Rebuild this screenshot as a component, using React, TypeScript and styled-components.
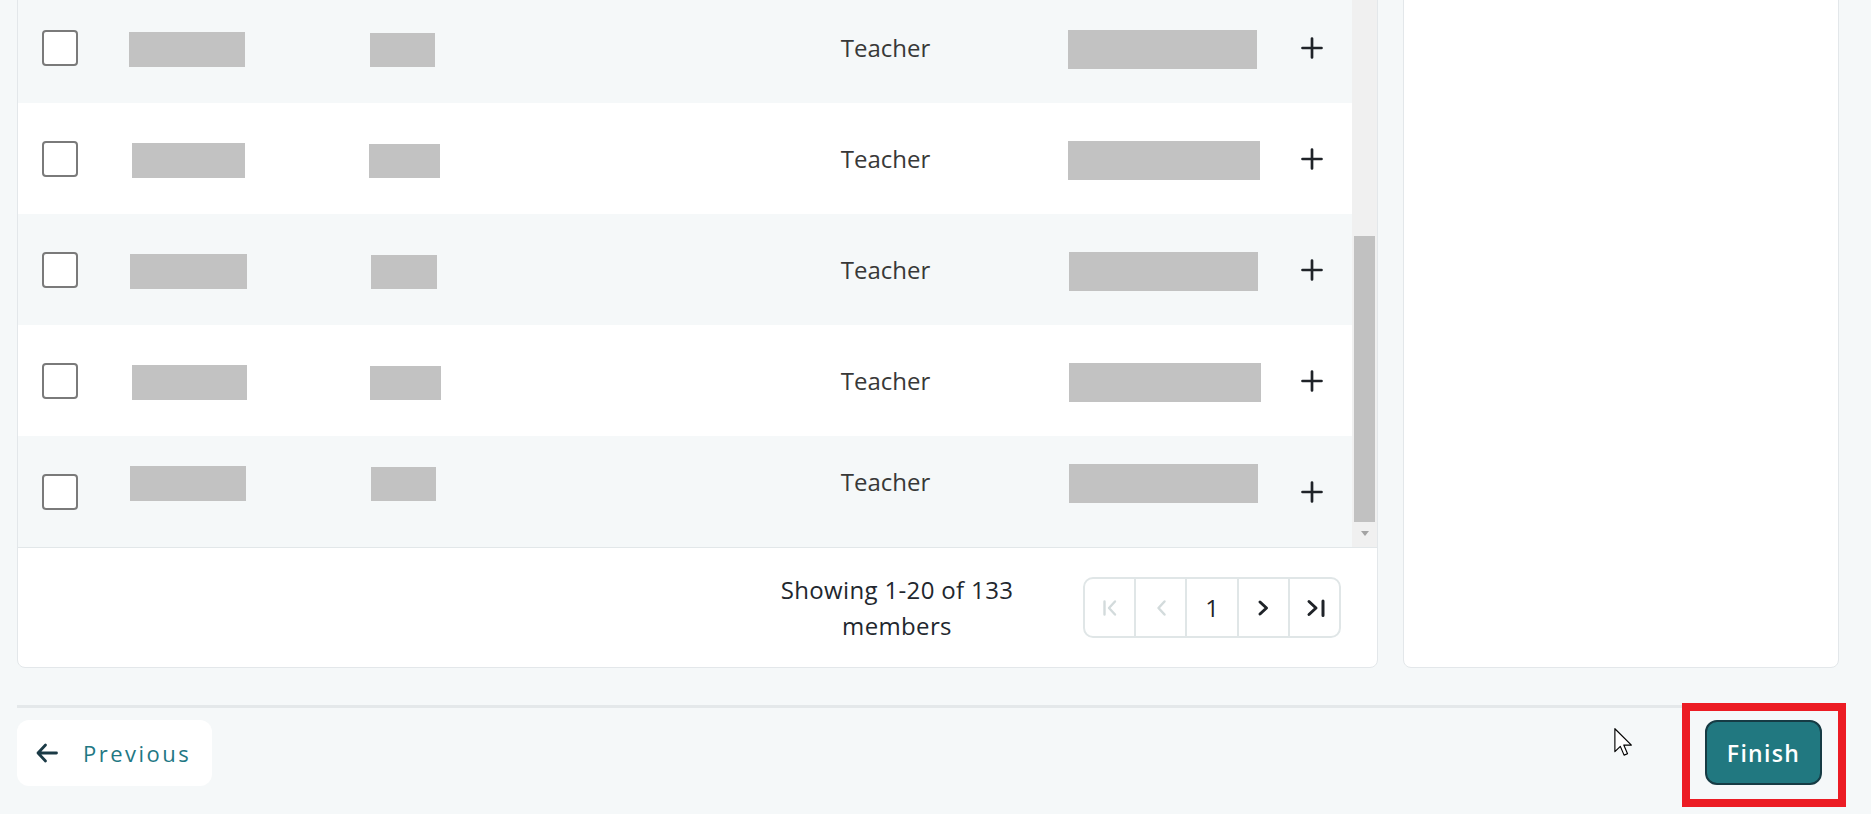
import styled, { createGlobalStyle } from "styled-components";

const GlobalStyle = createGlobalStyle`
  body {
    margin: 0;
    background: #f5f8f9;
    font-family: "Open Sans", "Liberation Sans", sans-serif;
  }
`;

const Page = styled.div`
  height: 814px;
  overflow: hidden;
  padding: 0 32px 0 17px;
  background: #f5f8f9;
`;

const Panels = styled.div`
  display: grid;
  grid-template-columns: 1361px 436px;
  column-gap: 25px;
  margin-top: -9px;
`;

const Card = styled.div`
  background: #ffffff;
  border: 1px solid #e3e7ea;
  border-radius: 8px;
  overflow: hidden;
`;

const TableCard = styled(Card)`
  display: flex;
  flex-direction: column;
`;

const Body = styled.div`
  display: flex;
`;

const Rows = styled.div`
  flex: 1;
`;

const Row = styled.div<{ $odd: boolean }>`
  display: grid;
  grid-template-columns: 111px 241px 333px 365px 233px 1fr;
  align-items: center;
  height: 111px;
  background: ${(p) => (p.$odd ? "#f5f8f9" : "#ffffff")};
`;

const CheckCell = styled.div`
  padding-left: 24px;
  display: flex;
`;

const Check = styled.input.attrs({ type: "checkbox" })`
  appearance: none;
  width: 36px;
  height: 36px;
  margin: 0;
  border: 2px solid #7a7a7a;
  border-radius: 4px;
  background: #fff;
`;

const Redacted = styled.div<{ $w: number; $x: number; $h: number; $lift: number }>`
  width: ${(p) => p.$w}px;
  height: ${(p) => p.$h}px;
  margin-left: ${(p) => p.$x}px;
  margin-top: 4px;
  margin-bottom: ${(p) => p.$lift * 2}px;
  background: #c2c2c2;
`;

const Role = styled.div<{ $lift: number }>`
  text-align: center;
  font-size: 24px;
  line-height: 32px;
  color: #383838;
  margin-bottom: ${(p) => p.$lift * 2}px;
`;

const AddCell = styled.div`
  display: flex;
  color: #1f2328;
`;

const Scrollbar = styled.div`
  width: 25px;
  background: #f0f0f0;
  display: flex;
  flex-direction: column;
  align-items: center;
`;

const Thumb = styled.div`
  width: 21px;
  height: 286px;
  margin-top: 244px;
  background: #c1c1c1;
`;

const ScrollButton = styled.div`
  margin-top: auto;
  height: 25px;
  display: flex;
  align-items: center;
  padding-bottom: 3px;
  box-sizing: border-box;
`;

const DownArrow = styled.div`
  width: 0;
  height: 0;
  border-left: 4px solid transparent;
  border-right: 4px solid transparent;
  border-top: 5px solid #a3a3a3;
`;

const Footer = styled.div`
  height: 120px;
  box-sizing: border-box;
  border-top: 1px solid #e2e7e9;
  display: flex;
  align-items: center;
  justify-content: flex-end;
  gap: 36px;
  padding-right: 36px;
`;

const Summary = styled.div`
  width: 300px;
  text-align: center;
  font-size: 24px;
  line-height: 36px;
  letter-spacing: 0.35px;
  color: #22272e;
`;

const Pager = styled.div`
  display: flex;
  width: 258px;
  height: 61px;
  box-sizing: border-box;
  border: 2px solid #e0e6e7;
  border-radius: 10px;
`;

const PageCell = styled.div<{ $first?: boolean }>`
  flex: 1;
  display: flex;
  align-items: center;
  justify-content: center;
  border-left: ${(p) => (p.$first ? "none" : "2px solid #e0e6e7")};
  font-size: 24px;
  color: #1f2328;
`;

const Divider = styled.div`
  height: 3px;
  margin-top: 37px;
  background: #e4e8ea;
`;

const Nav = styled.div`
  position: relative;
  display: flex;
  justify-content: space-between;
  align-items: flex-start;
  margin-top: 12px;
`;

const PrevButton = styled.button`
  display: flex;
  align-items: center;
  gap: 24px;
  height: 66px;
  width: 195px;
  padding: 0 0 0 18px;
  border: none;
  border-radius: 12px;
  background: #ffffff;
  color: #1f7884;
  font-family: "Open Sans", sans-serif;
  font-size: 22px;
  letter-spacing: 2.5px;
`;

const FinishWrap = styled.div`
  position: relative;
  margin-right: 17px;
`;

const FinishButton = styled.button`
  display: block;
  width: 117px;
  height: 65px;
  border: 2px solid #163b44;
  border-radius: 12px;
  background: #217880;
  color: #ffffff;
  font-family: "Open Sans", sans-serif;
  font-size: 23px;
  font-weight: 600;
  letter-spacing: 1.3px;
`;

const Highlight = styled.div`
  position: absolute;
  left: -23px;
  top: -17px;
  right: -24px;
  bottom: -22px;
  border: 8px solid #ec1c24;
  pointer-events: none;
`;

const Cursor = styled.svg`
  position: absolute;
  left: 1597px;
  top: 8px;
`;

const rows = [
  { a: [0, 116], b: [0, 65], c: [0, 189], lift: 0 },
  { a: [3, 113], b: [-1, 71], c: [0, 192], lift: 0 },
  { a: [1, 117], b: [1, 66], c: [1, 189], lift: 0 },
  { a: [3, 115], b: [0, 71], c: [1, 192], lift: 0 },
  { a: [1, 116], b: [1, 65], c: [1, 189], lift: 10 },
];

function PlusIcon() {
  return (
    <svg width="22" height="22" viewBox="0 0 22 22">
      <path d="M1.5 11h19M11 1.5v19" stroke="currentColor" strokeWidth="2.7" strokeLinecap="round" />
    </svg>
  );
}

function PagerIcon({ d, color, width }: { d: string; color: string; width: number }) {
  return (
    <svg width="24" height="24" viewBox="0 0 24 24" fill="none">
      <path d={d} stroke={color} strokeWidth={width} strokeLinecap="round" strokeLinejoin="round" />
    </svg>
  );
}

export default function App() {
  return (
    <Page>
      <GlobalStyle />
      <Panels>
        <TableCard>
          <Body>
            <Rows>
              {rows.map((r, i) => (
                <Row key={i} $odd={i % 2 === 0}>
                  <CheckCell>
                    <Check readOnly />
                  </CheckCell>
                  <div>
                    <Redacted $x={r.a[0]} $w={r.a[1]} $h={35} $lift={r.lift} />
                  </div>
                  <div>
                    <Redacted $x={r.b[0]} $w={r.b[1]} $h={34} $lift={r.lift} />
                  </div>
                  <Role $lift={r.lift}>Teacher</Role>
                  <div>
                    <Redacted $x={r.c[0]} $w={r.c[1]} $h={39} $lift={r.lift} />
                  </div>
                  <AddCell>
                    <PlusIcon />
                  </AddCell>
                </Row>
              ))}
            </Rows>
            <Scrollbar>
              <Thumb />
              <ScrollButton>
                <DownArrow />
              </ScrollButton>
            </Scrollbar>
          </Body>
          <Footer>
            <Summary>Showing 1-20 of 133 members</Summary>
            <Pager>
              <PageCell $first>
                <PagerIcon d="M6.5 5.5v13M17 5.5 11 12l6 6.5" color="#d3dbdc" width={2.4} />
              </PageCell>
              <PageCell>
                <PagerIcon d="M15.5 5.5 9.5 12l6 6.5" color="#d3dbdc" width={2.5} />
              </PageCell>
              <PageCell>1</PageCell>
              <PageCell>
                <PagerIcon d="M9 6l6.5 6L9 18" color="#1f2328" width={3} />
              </PageCell>
              <PageCell>
                <PagerIcon d="M7 5.5l7 6.5-7 6.5M21 5v14.5" color="#1f2328" width={3} />
              </PageCell>
            </Pager>
          </Footer>
        </TableCard>
        <Card />
      </Panels>
      <Divider />
      <Nav>
        <PrevButton>
          <svg width="24" height="22" viewBox="0 0 24 22" fill="none">
            <path
              d="M10.5 3 3 11l7.5 8M3 11h18.5"
              stroke="#1b3a46"
              strokeWidth="2.8"
              strokeLinecap="round"
              strokeLinejoin="round"
            />
          </svg>
          Previous
        </PrevButton>
        <Cursor width="19" height="28" viewBox="0 0 13 19.5">
          <path
            d="M0.5 0.5v16l3.8-3.7 2.6 6.1 2.4-1-2.6-6h5.3z"
            fill="#ffffff"
            stroke="#000000"
            strokeWidth="0.8"
            strokeLinejoin="round"
          />
        </Cursor>
        <FinishWrap>
          <FinishButton>Finish</FinishButton>
          <Highlight />
        </FinishWrap>
      </Nav>
    </Page>
  );
}
